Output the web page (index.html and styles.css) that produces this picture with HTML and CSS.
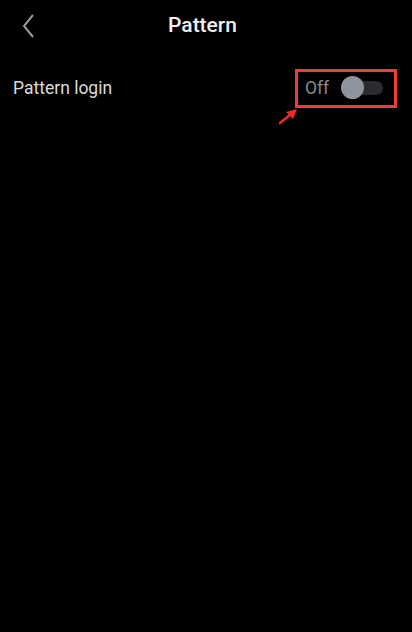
FILE: index.html
```html
<!DOCTYPE html>
<html>
<head>
<meta charset="utf-8">
<link rel="stylesheet" href="styles.css">
</head>
<body>
<div class="screen">
  <header class="topbar">
    <div class="back">
      <svg width="14" height="26" viewBox="0 0 14 26"><polyline points="11,2 2,13 11,24" fill="none" stroke="#9a9a9a" stroke-width="2" stroke-linejoin="miter"/></svg>
    </div>
    <h1 class="title">Pattern</h1>
    <div class="spacer"></div>
  </header>
  <div class="row">
    <span class="label">Pattern login</span>
    <div class="highlight">
      <span class="state">Off</span>
      <div class="toggle"><div class="knob"></div></div>
      <svg class="arrow" width="24" height="20" viewBox="0 0 24 20"><line x1="3" y1="17" x2="14" y2="8" stroke="#f02828" stroke-width="2.5" stroke-linecap="round"/><polygon points="20,3 9,6 16,13" fill="#f02828"/></svg>
    </div>
  </div>
</div>
</body>
</html>
```
FILE: styles.css
```css
html, body {
  margin: 0;
  padding: 0;
  background: #000;
}
.screen {
  width: 412px;
  height: 632px;
  background: #000;
  font-family: Roboto, "Noto Sans", sans-serif;
}
.topbar {
  height: 50px;
  display: grid;
  grid-template-columns: 60px 1fr 60px;
  align-items: center;
}
.back {
  padding-left: 22px;
  padding-top: 1px;
  display: flex;
  align-items: center;
}
.title {
  margin: 0;
  text-align: center;
  font-size: 21px;
  font-weight: 500;
  color: #f0f0f0;
  padding-right: 7px;
}
.row {
  height: 76px;
  display: flex;
  align-items: center;
  justify-content: space-between;
  padding: 0 15px 0 13px;
  box-sizing: border-box;
}
.label {
  font-size: 17.5px;
  color: #dcdcdc;
}
.highlight {
  position: relative;
  width: 102px;
  height: 39px;
  box-sizing: border-box;
  border: 3px solid #f23a3a;
  display: flex;
  align-items: center;
  padding-left: 7px;
  gap: 12px;
}
.state {
  font-size: 17.5px;
  color: #8a8a8a;
}
.toggle {
  position: relative;
  width: 42px;
  height: 14px;
  border-radius: 7px;
  background: #2b2b2f;
}
.knob {
  position: absolute;
  left: 0;
  top: -5px;
  width: 23px;
  height: 23px;
  border-radius: 50%;
  background: #8f939e;
}
.arrow {
  position: absolute;
  left: -21px;
  top: 34px;
}
```
